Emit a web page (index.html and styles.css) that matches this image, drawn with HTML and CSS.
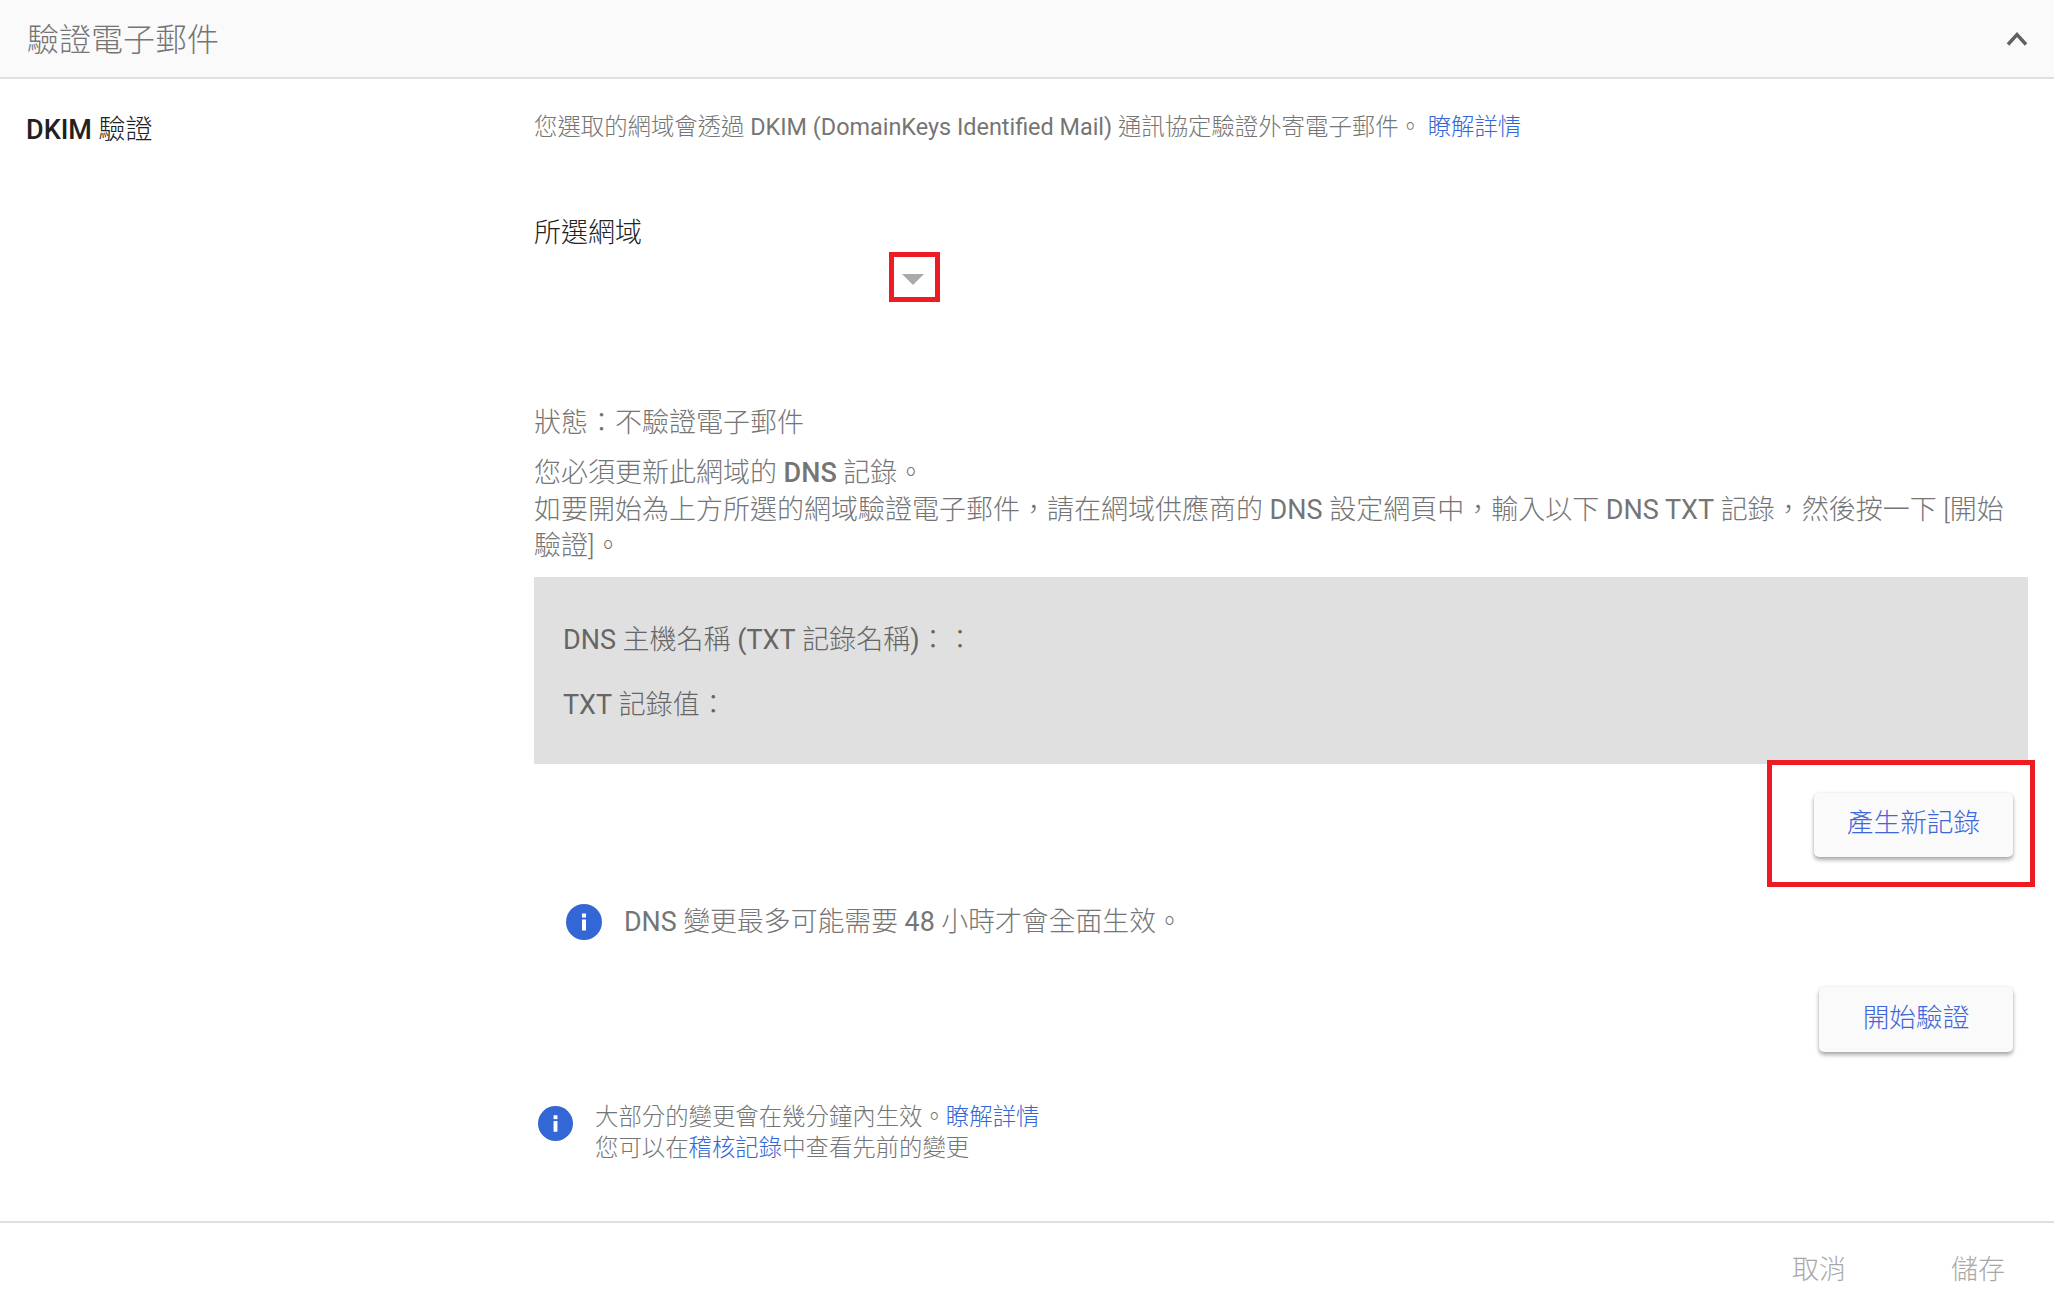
FILE: index.html
```html
<!DOCTYPE html>
<html lang="zh-TW">
<head>
<meta charset="utf-8">
<title>驗證電子郵件</title>
<link rel="stylesheet" href="styles.css">
</head>
<body>
<div class="page">
  <header class="head">
    <h1 class="head-title">驗證電子郵件</h1>
    <svg class="chevron" width="24" height="16" viewBox="0 0 24 16"><path d="M3 13.5 12 3.5 21 13.5" fill="none" stroke="#616161" stroke-width="3.4"/></svg>
  </header>
  <main class="section">
    <div class="side"><span class="lat-strong">DKIM</span> 驗證</div>
    <div class="content">
      <p class="desc">您選取的網域會透過 <span class="lat">DKIM (DomainKeys Identified Mail)</span> 通訊協定驗證外寄電子郵件。 <a class="link" href="#">瞭解詳情</a></p>
      <div class="label">所選網域</div>
      <div class="dropdown">
        <span class="caret"><i class="mark mark-caret"></i></span>
      </div>
      <p class="status">狀態：不驗證電子郵件</p>
      <p class="para">您必須更新此網域的 <b>DNS</b> 記錄。<br>如要開始為上方所選的網域驗證電子郵件，請在網域供應商的 <span class="lat">DNS</span> 設定網頁中，輸入以下 <span class="lat">DNS TXT</span> 記錄，然後按一下 [開始驗證]。</p>
      <div class="record">
        <div><span class="lat">DNS</span> 主機名稱 <span class="lat">(TXT</span> 記錄名稱<span class="lat">)</span>：：</div>
        <div><span class="lat">TXT</span> 記錄值：</div>
      </div>
      <div class="btn-row row-new">
        <span class="btn-wrap">
          <button class="btn btn-new">產生新記錄</button>
          <i class="mark mark-btn"></i>
        </span>
      </div>
      <div class="note note-dns">
        <svg class="info" viewBox="0 0 36 36"><circle cx="18" cy="18" r="18" fill="#3367d6"/><rect x="16" y="15.5" width="4" height="11" fill="#fff"/><rect x="16" y="9.5" width="4" height="4" fill="#fff"/></svg>
        <span><span class="lat">DNS</span> 變更最多可能需要 <span class="lat">48</span> 小時才會全面生效。</span>
      </div>
      <div class="btn-row row-start">
        <button class="btn btn-start">開始驗證</button>
      </div>
      <div class="note note-help">
        <svg class="info info-small" viewBox="0 0 36 36"><circle cx="18" cy="18" r="18" fill="#3367d6"/><rect x="16" y="15.5" width="4" height="11" fill="#fff"/><rect x="16" y="9.5" width="4" height="4" fill="#fff"/></svg>
        <span>大部分的變更會在幾分鐘內生效。<a class="link" href="#">瞭解詳情</a><br>您可以在<a class="link" href="#">稽核記錄</a>中查看先前的變更</span>
      </div>
    </div>
  </main>
  <footer class="foot">
    <span>取消</span>
    <span>儲存</span>
  </footer>
</div>
</body>
</html>
```

FILE: styles.css
```css
* { box-sizing: border-box; }
html, body { margin: 0; padding: 0; background: #fff; }
body {
  font-family: Roboto, "Noto Sans CJK TC", sans-serif;
  font-weight: 300;
  font-size: 27px;
  color: #757575;
  overflow: hidden;
}
p { margin: 0; }
a.link { color: #3367d6; text-decoration: none; }
.lat { font-weight: 400; }
.lat-strong { font-weight: 500; }
.page { height: 1294px; width: 2054px; }

.head {
  height: 79px;
  background: #fafafa;
  border-bottom: 2px solid #e0e0e0;
  display: flex;
  align-items: center;
  justify-content: space-between;
  padding: 0 25px 0 27px;
}
.head-title { margin: 0 0 3px; font-size: 32px; font-weight: 300; color: #757575; }

.section { display: flex; padding-right: 26px; }
.side {
  width: 534px;
  flex: none;
  padding: 31px 0 0 26px;
  font-size: 27px;
  line-height: 40px;
  color: #212121;
}
.content { flex: 1; min-width: 0; padding: 32px 0 57px; }

.desc { font-size: 23.4px; line-height: 32px; }
.label { margin-top: 72px; line-height: 36px; color: #212121; }
.dropdown { height: 154px; padding: 1px 0 0 355px; }
.caret {
  display: block;
  position: relative;
  width: 51px;
  height: 50px;
  padding: 22px 0 0 13px;
}
.caret::before {
  content: "";
  display: block;
  width: 0;
  height: 0;
  border-left: 11px solid transparent;
  border-right: 11px solid transparent;
  border-top: 11px solid #aaa;
}
.mark { position: absolute; border: 5px solid #ed1c24; pointer-events: none; }
.mark-caret { inset: 0; }
.status { line-height: 36px; }
.para { margin-top: 14px; line-height: 36.5px; }
.para b { font-weight: 500; }
.record {
  margin-top: 12px;
  height: 187px;
  background: #e0e0e0;
  padding: 45px 29px 0;
  display: flex;
  flex-direction: column;
  gap: 29px;
  line-height: 36px;
  color: #666;
}
.btn-row { display: flex; justify-content: flex-end; padding-right: 15px; }
.row-new { margin-top: 29px; }
.row-start { margin-top: 47px; }
.btn-wrap { position: relative; display: block; }
.btn {
  display: block;
  border: 0;
  border-radius: 5px;
  background: #fafafa;
  color: #3f66dd;
  font: inherit;
  font-size: 26.67px;
  box-shadow: 0 3px 4px rgba(0,0,0,.32), 0 0 3px rgba(0,0,0,.1);
  padding: 0 0 8px;
}
.btn-new { width: 199px; height: 64px; }
.btn-start { width: 194px; height: 65px; }
.mark-btn { top: -33px; bottom: -30px; left: -47px; right: -22px; }

.note { display: flex; align-items: flex-start; }
.note-dns { margin-top: 47px; padding-left: 32px; gap: 22px; line-height: 36px; font-size: 26.85px; }
.info { width: 36px; height: 36px; flex: none; display: block; }
.note-help { margin-top: 50px; padding-left: 4px; gap: 22px; font-size: 23.4px; line-height: 31px; }
.info-small { margin-top: 4px; width: 35px; height: 35px; }

.foot {
  border-top: 2px solid #e0e0e0;
  padding: 29px 49px 0 0;
  display: flex;
  justify-content: flex-end;
  gap: 105px;
  line-height: 36px;
  color: #a8a8a8;
}
```
